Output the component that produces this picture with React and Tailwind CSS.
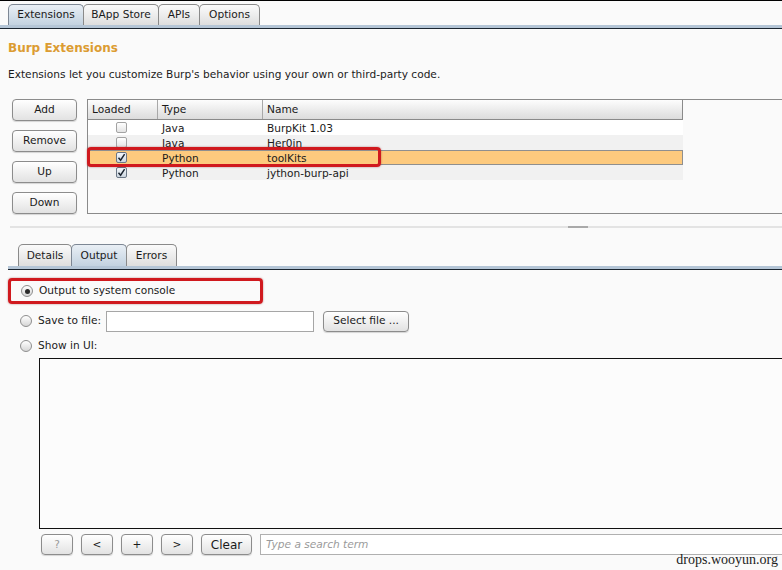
import React from 'react';

function Tab({ label, active, width }) {
  return (
    <div
      className={
        active
          ? 'h-full flex items-center justify-center border border-b-0 border-[#7d8794] rounded-t-[5px] bg-gradient-to-b from-[#e9eff5] to-[#c3d2e0] -mr-px shrink-0'
          : 'h-full flex items-center justify-center border border-b-0 border-[#8a8a8a] rounded-t-[5px] bg-gradient-to-b from-[#fbfbfb] to-[#dedede] -mr-px shrink-0'
      }
      style={{ width }}
    >
      {label}
    </div>
  );
}

function Btn({ children, className = '', muted }) {
  return (
    <div
      className={
        'shrink-0 flex items-center justify-center rounded-[4px] border border-[#8c8c8c] bg-gradient-to-b from-[#ffffff] to-[#e2e2e2] shadow-[0_1px_1px_rgba(0,0,0,0.15)] ' +
        (muted ? 'text-[#9a9a9a] ' : 'text-[#1a1a1a] ') +
        className
      }
    >
      {children}
    </div>
  );
}

function Check({ checked }) {
  return (
    <div
      className={
        checked
          ? 'w-[11px] h-[11px] rounded-[2px] border border-[#6b7785] bg-gradient-to-b from-[#f4f7fa] to-[#ccd6e0] flex items-center justify-center'
          : 'w-[11px] h-[11px] rounded-[2px] border border-[#a3a3a3] bg-gradient-to-b from-[#ffffff] to-[#e4e4e4]'
      }
    >
      {checked && (
        <svg width="9" height="9" viewBox="0 0 9 9">
          <path d="M1.5 4.8 L3.6 7.2 L7.6 1.2" fill="none" stroke="#1b2430" strokeWidth="1.5" />
        </svg>
      )}
    </div>
  );
}

function Radio({ on }) {
  return (
    <div className="w-[12px] h-[12px] rounded-full border border-[#8e8e8e] bg-gradient-to-b from-[#ffffff] to-[#d6d6d6] flex items-center justify-center shrink-0">
      {on && <div className="w-[5px] h-[5px] rounded-full bg-[#2a2a2a]" />}
    </div>
  );
}

const rows = [
  { loaded: false, type: 'Java', name: 'BurpKit 1.03', bg: 'bg-white' },
  { loaded: false, type: 'Java', name: 'Her0in', bg: 'bg-[#f1f1f1]' },
  { loaded: true, type: 'Python', name: 'toolKits', bg: 'bg-[#fdca7e] shadow-[inset_0_0_0_1px_#8f8f8f]' },
  { loaded: true, type: 'Python', name: 'jython-burp-api', bg: 'bg-[#f1f1f1]' },
];

export default function App() {
  return (
    <div className="w-[782px] h-[570px] overflow-hidden relative bg-[#fafafa] border-t border-black font-['DejaVu_Sans',sans-serif] text-[10.6px] text-[#1a1a1a]">
      {/* top tabs */}
      <div className="h-[24px] pt-[3px] pl-[8px] flex">
        <Tab label="Extensions" active width={76} />
        <Tab label="BApp Store" width={76} />
        <Tab label="APIs" width={42} />
        <Tab label="Options" width={61} />
      </div>
      <div className="h-[4px] bg-[#b4c5d6] border-b border-[#1b2530]" />

      <div className="mt-[11px] pl-[8px] text-[12px] leading-[16px] font-bold text-[#dc9c32]">Burp Extensions</div>
      <div className="mt-[11px] pl-[8px] leading-[14px]">
        Extensions let you customize Burp's behavior using your own or third-party code.
      </div>

      {/* extensions list */}
      <div className="mt-[18px] flex h-[115px]">
        <div className="pl-[12px] w-[87px] flex flex-col gap-[9px] shrink-0">
          <Btn className="w-[65px] h-[22px]">Add</Btn>
          <Btn className="w-[65px] h-[22px]">Remove</Btn>
          <Btn className="w-[65px] h-[22px]">Up</Btn>
          <Btn className="w-[65px] h-[22px]">Down</Btn>
        </div>
        <div className="relative w-[720px] shrink-0 border border-r-0 border-[#8a8a8a] bg-[#fafafa]">
          <div className="flex w-[595px] h-[20px] border-b border-r border-[#8a8a8a] bg-gradient-to-b from-[#fdfdfd] to-[#dcdcdc]">
            <div className="w-[70px] pl-[4px] flex items-center border-r border-[#a8a8a8]">Loaded</div>
            <div className="w-[105px] pl-[4px] flex items-center border-r border-[#a8a8a8]">Type</div>
            <div className="flex-1 pl-[4px] flex items-center">Name</div>
          </div>
          {rows.map((r, i) => (
            <div key={i} className={'flex w-[595px] h-[15px] items-center ' + r.bg}>
              <div className="w-[70px] flex justify-center pr-[3px]">
                <Check checked={r.loaded} />
              </div>
              <div className="w-[105px] pl-[4px] leading-[14px]">{r.type}</div>
              <div className="flex-1 pl-[4px] leading-[14px]">{r.name}</div>
            </div>
          ))}
          <div className="absolute left-[-1px] top-[47px] w-[294px] h-[20px] border-[3px] border-[#d0191e] rounded-[4px] shadow-[0_0_2px_rgba(120,0,0,0.5)]" />
        </div>
      </div>

      {/* split divider */}
      <div className="mt-[12px] ml-[10px] h-[2px] bg-[#e3e3e3] flex pl-[558px]">
        <div className="w-[20px] h-[2px] bg-[#a9a9a9]" />
      </div>

      {/* bottom tabs */}
      <div className="mt-[16px] h-[22px] pl-[18px] flex">
        <Tab label="Details" width={54} />
        <Tab label="Output" active width={56} />
        <Tab label="Errors" width={51} />
      </div>
      <div className="ml-[8px] h-[4px] bg-[#b4c5d6] border-b border-[#1b2530]" />

      {/* output options */}
      <div className="mt-[8px] ml-[8px] w-[255px] h-[26px] border-[3px] border-[#d0191e] rounded-[4px] shadow-[0_0_2px_rgba(120,0,0,0.5)] flex items-center gap-[6px] pl-[10px]">
        <Radio on />
        <span>Output to system console</span>
      </div>
      <div className="mt-[6px] h-[22px] flex items-center pl-[20px]">
        <Radio />
        <span className="ml-[6px]">Save to file:</span>
        <div className="ml-[5px] w-[208px] h-[21px] border border-[#a6a6a6] bg-white shrink-0" />
        <Btn className="ml-[9px] w-[86px] h-[21px]">Select file ...</Btn>
      </div>
      <div className="mt-[7px] h-[14px] flex items-center pl-[20px]">
        <Radio />
        <span className="ml-[6px]">Show in UI:</span>
      </div>
      <div className="mt-[5px] ml-[39px] w-[760px] h-[171px] border border-[#111] bg-[#fcfcfc]" />

      {/* search bar */}
      <div className="mt-[5px] h-[21px] pl-[41px] flex gap-[8px]">
        <Btn muted className="w-[32px] h-[21px]">?</Btn>
        <Btn className="w-[32px] h-[21px]">&lt;</Btn>
        <Btn className="w-[32px] h-[21px]">+</Btn>
        <Btn className="w-[32px] h-[21px]">&gt;</Btn>
        <Btn className="w-[51px] h-[21px] text-[12px]">Clear</Btn>
        <div className="shrink-0 w-[540px] h-[21px] border border-[#b0b0b0] bg-white pl-[5px] flex items-center italic text-[#9a9a9a]">
          Type a search term
        </div>
      </div>

      <div className="absolute right-[4px] bottom-[2px] font-['Liberation_Serif',serif] text-[14px] leading-[16px] text-[#222]">
        drops.wooyun.org
      </div>
    </div>
  );
}
